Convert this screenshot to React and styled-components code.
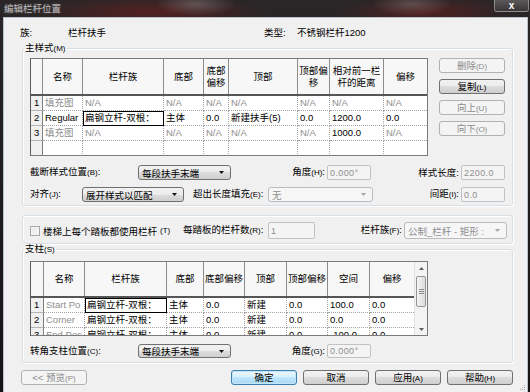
import React from "react";
import styled, { createGlobalStyle, css } from "styled-components";

const GlobalStyle = createGlobalStyle`
  * { box-sizing: border-box; }
  html, body { margin: 0; padding: 0; background: #1c1819; }
  body {
    font-family: "Liberation Sans", "Noto Sans CJK SC", sans-serif;
    font-size: 9.5px;
    color: #000;
  }
`;

const MAIN_COLS = "12px 40px 81px 40px 25px 69px 32px 54px 43px";
const POST_COLS = "13px 41px 82px 37px 41px 42px 41px 42px 44px";

const dim = (t) => ({ t, dim: true });
const txt = (t) => ({ t });
const focus = (t) => ({ t, focus: true });

const mainHead = ["", "名称", "栏杆族", "底部", "底部偏移", "顶部", "顶部偏移", "相对前一栏杆的距离", "偏移"];
const mainRows = [
  ["1", dim("填充图"), dim("N/A"), dim("N/A"), dim("N/A"), dim("N/A"), dim("N/A"), dim("N/A"), dim("N/A")],
  ["2", txt("Regular"), focus("扁钢立杆-双根："), txt("主体"), txt("0.0"), txt("新建扶手(5)"), txt("0.0"), txt("1200.0"), txt("0.0")],
  ["3", dim("填充图"), dim("N/A"), dim("N/A"), dim("N/A"), dim("N/A"), dim("N/A"), txt("1000.0"), dim("N/A")],
  ["", txt(""), txt(""), txt(""), txt(""), txt(""), txt(""), txt(""), txt("")],
];

const postHead = ["", "名称", "栏杆族", "底部", "底部偏移", "顶部", "顶部偏移", "空间", "偏移"];
const postRows = [
  ["1", dim("Start Po"), focus("扁钢立杆-双根："), txt("主体"), txt("0.0"), txt("新建"), txt("0.0"), txt("100.0"), txt("0.0")],
  ["2", dim("Corner"), txt("扁钢立杆-双根："), txt("主体"), txt("0.0"), txt("新建"), txt("0.0"), txt("0.0"), txt("0.0")],
  ["3", dim("End Pos"), txt("扁钢立杆-双根："), txt("主体"), txt("0.0"), txt("新建"), txt("0.0"), txt("-100.0"), txt("0.0")],
];

function App() {
  return (
    <>
      <GlobalStyle />
      <Window>
        <TitleBar>
          <Title>编辑栏杆位置</Title>
          <CloseButton>x</CloseButton>
        </TitleBar>
        <Client>
          <InfoRow>
            <span>族:</span>
            <span>栏杆扶手</span>
            <span>类型:</span>
            <span>不锈钢栏杆1200</span>
          </InfoRow>

          <Group $mt={5} $pad="5px 7px 3px">
            <Legend>
              主样式<Key>(M)</Key>
            </Legend>
            <TableLine>
              <TableFrame $w={398} $h={98}>
                <DataTable cols={MAIN_COLS} head={mainHead} rows={mainRows} headHeight={37} />
              </TableFrame>
              <SideButtons>
                <Button disabled>
                  删除<Key>(D)</Key>
                </Button>
                <Button>
                  复制<Key>(L)</Key>
                </Button>
                <Button disabled>
                  向上<Key>(U)</Key>
                </Button>
                <Button disabled>
                  向下<Key>(O)</Key>
                </Button>
              </SideButtons>
            </TableLine>

            <FormRow $mt={9}>
              <FieldLabel $w={108}>
                截断样式位置<Key>(B)</Key>:
              </FieldLabel>
              <Combo w={93} value="每段扶手末端" />
              <FieldLabel $w={96} $right>
                角度<Key>(H)</Key>:
              </FieldLabel>
              <TextBox $w={44} value="0.000°" />
              <FieldLabel $w={90} $right>
                样式长度:
              </FieldLabel>
              <TextBox $w={44} value="2200.0" />
            </FormRow>

            <FormRow $mt={7}>
              <FieldLabel $w={52}>
                对齐<Key>(J)</Key>:
              </FieldLabel>
              <Combo w={102} value="展开样式以匹配" />
              <FieldLabel $w={84} $pl={9}>
                超出长度填充<Key>(E)</Key>:
              </FieldLabel>
              <Combo w={105} value="无" disabled />
              <FieldLabel $w={88} $right>
                间距<Key>(I)</Key>:
              </FieldLabel>
              <TextBox $w={44} value="0.0" />
            </FormRow>
          </Group>

          <Group $mt={9} $pad="6px 7px 4px">
            <FormRow $h={17}>
              <CheckLabel $w={153}>
                <CheckBox />
                楼梯上每个踏板都使用栏杆<Key>(T)</Key>
              </CheckLabel>
              <FieldLabel $w={85}>
                每踏板的栏杆数<Key>(R)</Key>:
              </FieldLabel>
              <TextBox $w={47} $h={17} value="1" />
              <FieldLabel $w={89} $right>
                栏杆族<Key>(F)</Key>:
              </FieldLabel>
              <Combo w={103} h={17} value="公制_栏杆 - 矩形 :" disabled />
            </FormRow>
          </Group>

          <Group $mt={0} $pad="7px 7px 4px">
            <Legend>
              支柱<Key>(S)</Key>
            </Legend>
            <TableFrame $w={398} $h={75} $flex>
              <TableBody>
                <DataTable cols={POST_COLS} head={postHead} rows={postRows} headHeight={36} />
              </TableBody>
              <Scrollbar>
                <ScrollArrow>
                  <svg width="5" height="3" viewBox="0 0 5 3">
                    <path d="M0 3 L2.5 0 L5 3 Z" fill="#5e5e5e" />
                  </svg>
                </ScrollArrow>
                <ScrollThumb>
                  <svg width="5" height="5" viewBox="0 0 5 5">
                    <path d="M0 0.5 H5 M0 2.5 H5 M0 4.5 H5" stroke="#8a8a8a" strokeWidth="1" />
                  </svg>
                </ScrollThumb>
                <ScrollTrack />
                <ScrollArrow>
                  <svg width="5" height="3" viewBox="0 0 5 3">
                    <path d="M0 0 L2.5 3 L5 0 Z" fill="#5e5e5e" />
                  </svg>
                </ScrollArrow>
              </Scrollbar>
            </TableFrame>
            <FormRow $mt={8} $h={14}>
              <FieldLabel $w={108}>
                转角支柱位置<Key>(C)</Key>:
              </FieldLabel>
              <Combo w={93} h={14} value="每段扶手末端" />
              <FieldLabel $w={96} $right>
                角度<Key>(G)</Key>:
              </FieldLabel>
              <TextBox $w={44} $h={14} value="0.000°" />
            </FormRow>
          </Group>

          <Footer>
            <Button $w={66} disabled>
              {"<< "}预览<Key>(P)</Key>
            </Button>
            <FooterRight>
              <Button $default>确定</Button>
              <Button>取消</Button>
              <Button>
                应用<Key>(A)</Key>
              </Button>
              <Button>
                帮助<Key>(H)</Key>
              </Button>
            </FooterRight>
          </Footer>

          <Grip>
            <svg width="6" height="6" viewBox="0 0 6 6">
              <rect x="4" y="0" width="1" height="1" fill="#a9a9a9" />
              <rect x="2" y="2" width="1" height="1" fill="#a9a9a9" />
              <rect x="4" y="2" width="1" height="1" fill="#a9a9a9" />
              <rect x="0" y="4" width="1" height="1" fill="#a9a9a9" />
              <rect x="2" y="4" width="1" height="1" fill="#a9a9a9" />
              <rect x="4" y="4" width="1" height="1" fill="#a9a9a9" />
            </svg>
          </Grip>
        </Client>
      </Window>
    </>
  );
}

function DataTable({ cols, head, rows, headHeight }) {
  return (
    <>
      <HeadRow $cols={cols} $h={headHeight}>
        {head.map((h, i) => (
          <HeadCell key={i}>{h}</HeadCell>
        ))}
      </HeadRow>
      {rows.map((r, i) => (
        <BodyRow key={i} $cols={cols}>
          <NumCell>{r[0]}</NumCell>
          {r.slice(1).map((c, j) => (
            <Cell key={j} $dim={c.dim} $focus={c.focus}>
              {c.t}
            </Cell>
          ))}
        </BodyRow>
      ))}
    </>
  );
}

function Combo({ w, h = 15, value, disabled }) {
  return (
    <Select $w={w} $h={h} disabled={disabled}>
      <SelectText>{value}</SelectText>
      <svg width="5" height="3" viewBox="0 0 5 3">
        <path d="M0 0 L2.5 3 L5 0 Z" fill={disabled ? "#a6a6a6" : "#111"} />
      </svg>
    </Select>
  );
}

export default App;

const Window = styled.div`
  width: 530px;
  height: 392px;
  overflow: hidden;
  display: flex;
  flex-direction: column;
  background:
    radial-gradient(ellipse 40px 12px at 196px 4px, rgba(170, 170, 170, 0.35), transparent),
    radial-gradient(ellipse 120px 16px at 150px 12px, rgba(120, 28, 28, 0.55), transparent),
    radial-gradient(ellipse 40px 12px at 412px 4px, rgba(170, 170, 170, 0.3), transparent),
    radial-gradient(ellipse 90px 16px at 425px 12px, rgba(120, 28, 28, 0.5), transparent),
    linear-gradient(#2a2627, #161314);
`;

const TitleBar = styled.div`
  height: 17px;
  flex-shrink: 0;
  display: flex;
  justify-content: space-between;
  align-items: flex-start;
`;

const Title = styled.span`
  color: #bdbdbd;
  padding: 3px 0 0 4px;
  line-height: 11px;
  text-shadow: 0 0 3px rgba(255, 255, 255, 0.25);
`;

const CloseButton = styled.div`
  width: 35px;
  height: 12px;
  margin-right: 1px;
  border: 1px solid rgba(210, 210, 210, 0.45);
  border-top: none;
  border-radius: 0 0 3px 3px;
  background: linear-gradient(#5c5859, #3a3637);
  color: #fff;
  font-weight: bold;
  font-size: 10px;
  line-height: 10px;
  display: flex;
  align-items: center;
  justify-content: center;
`;

const Client = styled.div`
  position: relative;
  flex: 1;
  margin-left: 3px;
  width: 525px;
  background: #f0f0f0;
  border: 1px solid #b9c2ca;
  border-bottom: none;
  display: flex;
  flex-direction: column;
`;

const InfoRow = styled.div`
  display: grid;
  grid-template-columns: 48px 196px 33px 1fr;
  margin-top: 9px;
  padding-left: 16px;
  line-height: 11px;
  height: 11px;
`;

const Group = styled.fieldset`
  margin: ${(p) => p.$mt}px 0 0 18px;
  width: 491px;
  min-inline-size: 0;
  padding: ${(p) => p.$pad};
  border: 1px solid #d5dfe5;
  border-radius: 3px;
  box-shadow: inset 1px 1px 0 #fff, 1px 1px 0 #fff;
`;

const Legend = styled.legend`
  margin-left: -6px;
  padding: 0 1px;
  line-height: 10px;
  height: 10px;
`;

const Key = styled.span`
  font-size: 8px;
`;

const TableLine = styled.div`
  display: flex;
  align-items: flex-start;
`;

const TableFrame = styled.div`
  width: ${(p) => p.$w}px;
  height: ${(p) => p.$h}px;
  flex-shrink: 0;
  border: 1px solid #7a7a7a;
  border-left-color: #5a5a5a;
  background: #fff;
  overflow: hidden;
  ${(p) =>
    p.$flex &&
    css`
      display: flex;
    `}
`;

const TableBody = styled.div`
  width: 383px;
  flex-shrink: 0;
`;

const HeadRow = styled.div`
  display: grid;
  grid-template-columns: ${(p) => p.$cols};
  height: ${(p) => p.$h}px;
  border-bottom: 2px solid #565656;
  background: #f7f7f7;
`;

const HeadCell = styled.div`
  display: flex;
  align-items: center;
  justify-content: center;
  text-align: center;
  line-height: 12px;
  padding: 0 1px;
  border-right: 1px solid #8c8c8c;
  &:last-child {
    border-right: none;
  }
`;

const BodyRow = styled.div`
  display: grid;
  grid-template-columns: ${(p) => p.$cols};
  height: 15px;
`;

const Cell = styled.div`
  padding-left: 2px;
  line-height: 14px;
  white-space: nowrap;
  overflow: hidden;
  color: ${(p) => (p.$dim ? "#8e8e8e" : "#000")};
  border-right: 1px dotted #a3a3a3;
  border-bottom: 1px dotted #a3a3a3;
  &:last-child {
    border-right: none;
  }
  ${(p) =>
    p.$focus &&
    css`
      outline: 1px solid #000;
      outline-offset: -1px;
    `}
`;

const NumCell = styled(Cell)`
  background: #f0f0f0;
  padding-left: 3px;
  border-right: 1px solid #7e7e7e;
  border-bottom: 1px solid #b4b4b4;
`;

const Scrollbar = styled.div`
  width: 13px;
  flex-shrink: 0;
  display: flex;
  flex-direction: column;
  align-items: center;
  background: #f3f3f3;
  border-left: 1px solid #e2e2e2;
`;

const ScrollArrow = styled.div`
  height: 12px;
  width: 100%;
  display: flex;
  align-items: center;
  justify-content: center;
`;

const ScrollThumb = styled.div`
  width: 10px;
  height: 31px;
  margin-top: 2px;
  border: 1px solid #979797;
  border-radius: 2px;
  background: linear-gradient(90deg, #f4f4f4, #dcdcdc);
  display: flex;
  align-items: center;
  justify-content: center;
`;

const ScrollTrack = styled.div`
  flex: 1;
`;

const SideButtons = styled.div`
  margin-left: 11px;
  display: flex;
  flex-direction: column;
  gap: 6px;
`;

const Button = styled.button`
  width: ${(p) => p.$w || 66}px;
  height: 15px;
  padding: 0;
  font: inherit;
  font-size: 9.5px;
  line-height: 13px;
  color: #000;
  border: 1px solid #707070;
  border-radius: 3px;
  background: linear-gradient(#f2f2f2 0%, #ebebeb 50%, #dddddd 50%, #cfcfcf 100%);
  white-space: nowrap;
  &:disabled {
    color: #8b8b8b;
    border-color: #adb2b5;
    background: #f4f4f4;
  }
  ${(p) =>
    p.$default &&
    css`
      border-color: #3c7fb1;
      background: linear-gradient(#eaf6fd 0%, #d9f0fc 50%, #bee6fd 50%, #a7d9f5 100%);
      box-shadow: inset 0 0 0 1px #c4e5f6;
    `}
`;

const FormRow = styled.div`
  display: flex;
  align-items: center;
  height: ${(p) => p.$h || 15}px;
  margin-top: ${(p) => p.$mt || 0}px;
`;

const FieldLabel = styled.span`
  width: ${(p) => p.$w}px;
  flex-shrink: 0;
  padding-left: ${(p) => p.$pl || 0}px;
  padding-right: ${(p) => (p.$right ? 2 : 0)}px;
  text-align: ${(p) => (p.$right ? "right" : "left")};
  white-space: nowrap;
  line-height: 12px;
`;

const CheckLabel = styled.label`
  width: ${(p) => p.$w}px;
  flex-shrink: 0;
  display: flex;
  align-items: center;
  gap: 3px;
  white-space: nowrap;
`;

const CheckBox = styled.span`
  width: 10px;
  height: 10px;
  flex-shrink: 0;
  border: 1px solid #a8a8a8;
  background: linear-gradient(135deg, #e6e6e6, #fafafa);
  box-shadow: inset 0 0 0 1px #f4f4f4;
`;

const Select = styled.button`
  width: ${(p) => p.$w}px;
  height: ${(p) => p.$h}px;
  flex-shrink: 0;
  padding: 0 6px 0 3px;
  font: inherit;
  font-size: 9.5px;
  display: flex;
  align-items: center;
  justify-content: space-between;
  color: #000;
  border: 1px solid #707070;
  border-radius: 3px;
  background: linear-gradient(#f2f2f2 0%, #ebebeb 50%, #dddddd 50%, #cfcfcf 100%);
  &:disabled {
    color: #8e8e8e;
    border-color: #b9bdc0;
    background: #f6f6f6;
  }
`;

const SelectText = styled.span`
  white-space: nowrap;
  overflow: hidden;
`;

const TextBox = styled.input.attrs({ readOnly: true, disabled: true })`
  width: ${(p) => p.$w}px;
  height: ${(p) => p.$h || 15}px;
  flex-shrink: 0;
  padding: 0 2px;
  font: inherit;
  font-size: 9px;
  letter-spacing: 0.4px;
  color: #8e8e8e;
  border: 1px solid #bfc3c6;
  border-radius: 2px;
  background: #f4f4f4;
  outline: none;
`;

const Footer = styled.div`
  display: flex;
  margin-top: 7px;
  padding-left: 17px;
`;

const FooterRight = styled.div`
  display: flex;
  gap: 6px;
  margin-left: 144px;
`;

const Grip = styled.div`
  position: absolute;
  right: 1px;
  bottom: 1px;
  width: 6px;
  height: 6px;
  display: flex;
`;
